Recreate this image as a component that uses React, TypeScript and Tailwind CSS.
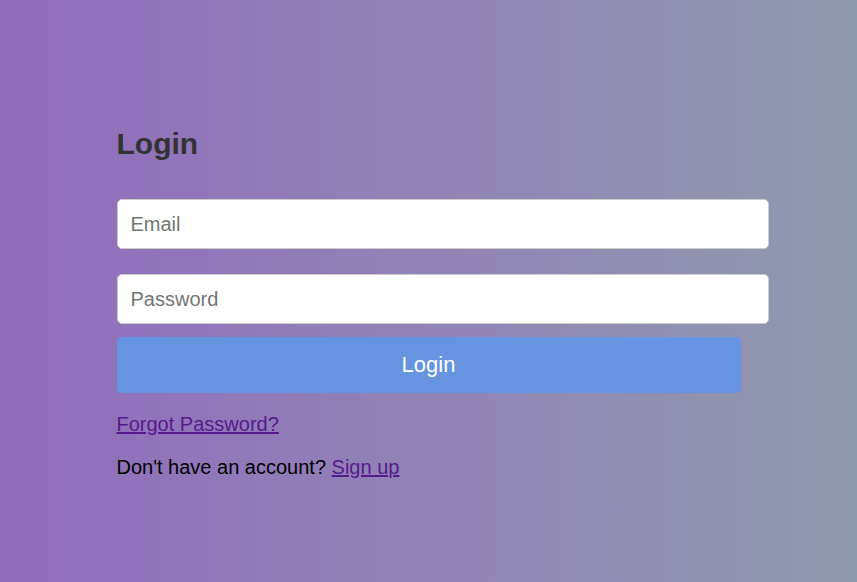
import React from "react";

export default function App() {
  return (
    <div
      className="w-full h-[582px] bg-gradient-to-r from-[#906bbd] to-[#909aad] overflow-hidden"
      style={{ fontFamily: '"Liberation Sans", Arial, sans-serif' }}
    >
      <div className="w-[624px] mx-auto pt-[127px]">
        <h1 className="text-[30px] leading-[34px] font-bold text-[#333333] m-0">Login</h1>
        <input
          type="email"
          placeholder="Email"
          className="block mt-[38px] w-[652px] h-[50px] box-border border border-[#cccccc] rounded-[5px] bg-white pl-[13px] pr-3 text-[20px] text-[#333] placeholder:text-[#757575] outline-none"
        />
        <input
          type="password"
          placeholder="Password"
          className="block mt-[25px] w-[652px] h-[50px] box-border border border-[#cccccc] rounded-[5px] bg-white pl-[13px] pr-3 text-[20px] text-[#333] placeholder:text-[#757575] outline-none"
        />
        <button className="block mt-[13px] w-[624px] h-[56px] rounded-[5px] bg-[#6694e1] text-white text-[22px] leading-[56px] text-center">
          Login
        </button>
        <div className="mt-[20px] text-[20px] leading-[23px]">
          <a href="#" className="text-[#551a8b] underline">Forgot Password?</a>
        </div>
        <div className="mt-[20px] text-[20px] leading-[23px] text-black">
          Don't have an account? <a href="#" className="text-[#551a8b] underline">Sign up</a>
        </div>
      </div>
    </div>
  );
}
